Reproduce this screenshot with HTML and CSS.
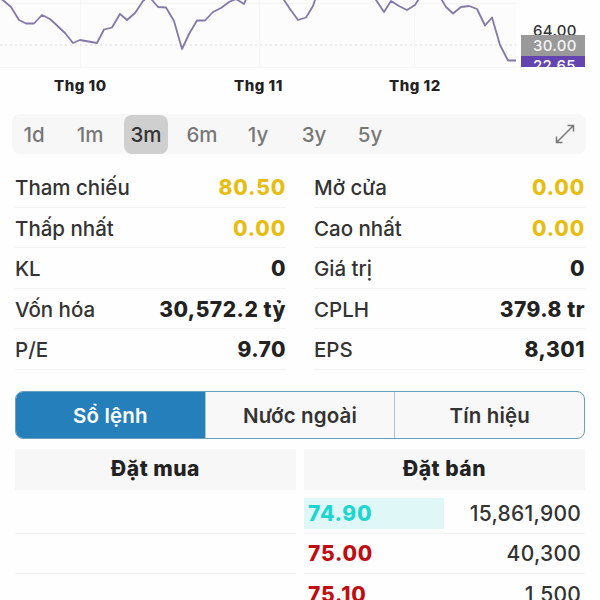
FILE: index.html
```html
<!DOCTYPE html>
<html lang="vi">
<head>
    <meta charset="UTF-8">
    <meta name="viewport" content="width=device-width, initial-scale=1.0">
    <title>Sổ lệnh</title>
    <link rel="stylesheet" href="styles.css">
</head>
<body>
    <div class="chart">
        <svg class="plot" width="516" height="68" viewBox="0 0 516 68">
            <rect width="516" height="68" fill="#fcfcfd"/>
            <path d="M0 3.5H516M0 67.5H516M80.5 0V68M259.5 0V68M414.5 0V68" stroke="#f6f6f8" fill="none"/>
            <path d="M0 45H516" stroke="#d9d9d9" stroke-dasharray="2 3" fill="none"/>
            <polyline points="0,-2 4,1 11,7 19,20 26,23.5 34,23.5 42,15 50,19 65,33 73,43 80,40 97,43 104,29.5 112,27.5 120,14 127,20 135,13 143,1 148,-3 152,0 158,7 166,7.5 174,21 182,49 189,34 197,20.5 205,20.5 213,12 221,8 229,2 236,-1 244,4 247,-3"/>
            <polyline points="282,-3 290,9 298,20 306,17.5 313,6 316,-3"/>
            <polyline points="374,-3 384,12 391,1 399,6 407,10 415,5 420,-3"/>
            <polyline points="440,-3 446,7 453,13.5 461,7 469,6 477,9 485,25.5 492,17.5 500,45 508,60.5 516,60.5"/>
        </svg>
        <div class="price-axis">
            <div class="axis-label">64.00</div>
            <div class="axis-label gray">30.00</div>
            <div class="axis-label purple">22.65</div>
        </div>
    </div>
    <div class="months">
        <span>Thg 10</span>
        <span>Thg 11</span>
        <span>Thg 12</span>
    </div>

    <div class="ranges">
        <span class="range">1d</span>
        <span class="range">1m</span>
        <span class="range active">3m</span>
        <span class="range">6m</span>
        <span class="range">1y</span>
        <span class="range">3y</span>
        <span class="range">5y</span>
        <svg class="expand" width="20" height="20" viewBox="0 0 20 20">
            <path d="M1.5 18.5L18.5 1.5M12.5 1.5H18.5V7.5M1.5 12.5V18.5H7.5"/>
        </svg>
    </div>

    <div class="stats">
        <div class="stat"><span>Tham chiếu</span><b class="yellow">80.50</b></div>
        <div class="stat"><span>Mở cửa</span><b class="yellow">0.00</b></div>
        <div class="stat"><span>Thấp nhất</span><b class="yellow">0.00</b></div>
        <div class="stat"><span>Cao nhất</span><b class="yellow">0.00</b></div>
        <div class="stat"><span>KL</span><b>0</b></div>
        <div class="stat"><span>Giá trị</span><b>0</b></div>
        <div class="stat"><span>Vốn hóa</span><b>30,572.2 tỷ</b></div>
        <div class="stat"><span>CPLH</span><b>379.8 tr</b></div>
        <div class="stat"><span>P/E</span><b>9.70</b></div>
        <div class="stat"><span>EPS</span><b>8,301</b></div>
    </div>

    <div class="tabs">
        <div class="tab active">Sổ lệnh</div>
        <div class="tab">Nước ngoài</div>
        <div class="tab">Tín hiệu</div>
    </div>

    <div class="book">
        <div class="side">
            <div class="side-title">Đặt mua</div>
            <div class="order"></div>
            <div class="order"></div>
            <div class="order"></div>
        </div>
        <div class="side">
            <div class="side-title">Đặt bán</div>
            <div class="order"><b class="price floor">74.90</b><span>15,861,900</span></div>
            <div class="order"><b class="price">75.00</b><span>40,300</span></div>
            <div class="order"><b class="price">75.10</b><span>1,500</span></div>
        </div>
    </div>
</body>
</html>
```
FILE: styles.css
```css
body {
    margin: 0;
    height: 600px;
    overflow: hidden;
    background-color: #fefefe;
    color: #333;
    font-family: Inter, sans-serif;
    font-size: 20.5px;
    font-weight: 500;
}
.chart {
    display: flex;
    height: 68px;
}
.plot {
    flex: none;
}
.plot polyline {
    fill: none;
    stroke: #8378a6;
    stroke-width: 1.8;
    stroke-linejoin: round;
}
.price-axis {
    width: 64px;
    height: 67px;
    margin-left: 5px;
    padding-top: 25px;
    box-sizing: border-box;
    overflow: hidden;
}
.axis-label {
    height: 10px;
    padding-left: 12px;
    font-size: 15px;
    letter-spacing: 0.3px;
    line-height: 11px;
    overflow: hidden;
}
.axis-label.gray {
    height: 21px;
    line-height: 21px;
    background-color: #999;
    color: #f4f4f4;
}
.axis-label.purple {
    height: 20px;
    line-height: 20px;
    background-color: #6445b0;
    color: #fff;
}
.months {
    display: flex;
    height: 46px;
    box-sizing: border-box;
    padding: 9px 0 0 54px;
    font-size: 15px;
    line-height: 18px;
    font-weight: 800;
    letter-spacing: 0.5px;
    color: #222;
}
.months span:nth-child(1) {
    width: 180px;
}
.months span:nth-child(2) {
    width: 155px;
}
.ranges {
    display: flex;
    align-items: center;
    height: 40px;
    margin: 0 14px 0 12px;
    padding-right: 11px;
    border-radius: 8px;
    background-color: #f7f7f7;
    color: #777;
}
.range {
    width: 44px;
    margin-right: 12px;
    line-height: 39px;
    text-align: center;
}
.range.active {
    border-radius: 8px;
    background-color: #cfcfcf;
    color: #333;
}
.expand {
    margin-left: auto;
    fill: none;
    stroke: #777;
    stroke-width: 1.5;
}
.stats {
    display: grid;
    grid-template-columns: 271px 271px;
    column-gap: 28px;
    padding: 13px 15px 0;
}
.stat {
    display: flex;
    justify-content: space-between;
    height: 40.6px;
    box-sizing: border-box;
    border-bottom: 1px solid #f2f2f2;
    line-height: 41px;
}
.stat b {
    font-size: 21px;
    font-weight: 800;
    letter-spacing: 0.5px;
    color: #222;
}
.stat .yellow {
    letter-spacing: 0.8px;
    color: #e8bd12;
}
.tabs {
    display: flex;
    height: 48px;
    margin: 21px 15px 10px;
    box-sizing: border-box;
    border: 1.5px solid #6b9dbd;
    border-radius: 8px;
    overflow: hidden;
    background-color: #f8f8f8;
}
.tab {
    flex: 1;
    border-left: 1px solid #b0c4d0;
    line-height: 47px;
    text-align: center;
    font-weight: 600;
    letter-spacing: 0.15px;
}
.tab.active {
    border-left: none;
    background-color: #257fba;
    color: #fff;
}
.book {
    display: flex;
    gap: 8px;
    margin: 0 15px;
}
.side {
    flex: 1;
}
.side-title {
    height: 41px;
    margin-bottom: 3px;
    background-color: #f7f7f7;
    font-size: 21px;
    line-height: 40px;
    text-align: center;
    font-weight: 800;
    letter-spacing: 0.5px;
    color: #222;
}
.order {
    display: flex;
    justify-content: space-between;
    align-items: center;
    height: 40.6px;
    box-sizing: border-box;
    border-bottom: 1px solid #f3f3f3;
    padding: 1px 4px 0 0;
    font-size: 21px;
    letter-spacing: 0.25px;
}
.price {
    width: 136px;
    padding-left: 4px;
    line-height: 31px;
    font-weight: 800;
    letter-spacing: 0.8px;
    color: #c00d12;
}
.price.floor {
    background-color: #e0f7f8;
    color: #1cd6d0;
}
```
